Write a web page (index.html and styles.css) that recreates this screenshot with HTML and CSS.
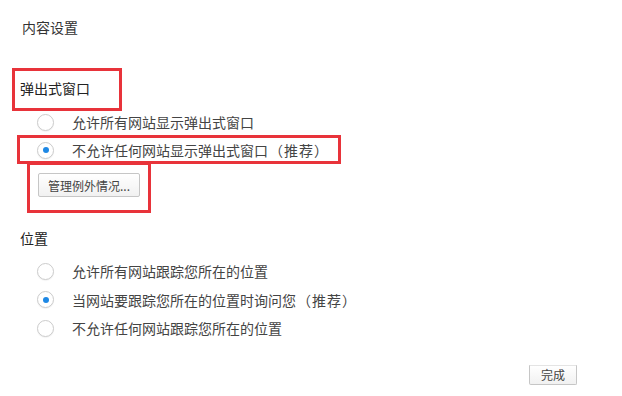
FILE: index.html
```html
<!DOCTYPE html>
<html lang="zh-CN">
<head>
    <meta charset="UTF-8">
    <title>内容设置</title>
    <link rel="stylesheet" href="styles.css">
</head>
<body>
    <div class="page">
        <div class="page-title">内容设置</div>

        <!-- 弹出式窗口 -->
        <div class="section popups">
            <div class="section-title">弹出式窗口</div>
            <div class="option-list">
                <label class="option"><span class="radio"></span>允许所有网站显示弹出式窗口</label>
                <label class="option"><span class="radio checked"></span>不允许任何网站显示弹出式窗口<span class="hint">（推荐）</span></label>
            </div>
            <button class="btn btn-exceptions">管理例外情况...</button>
        </div>

        <!-- 位置 -->
        <div class="section location">
            <div class="section-title">位置</div>
            <div class="option-list">
                <label class="option"><span class="radio"></span>允许所有网站跟踪您所在的位置</label>
                <label class="option"><span class="radio checked"></span>当网站要跟踪您所在的位置时询问您<span class="hint">（推荐）</span></label>
                <label class="option"><span class="radio"></span>不允许任何网站跟踪您所在的位置</label>
            </div>
        </div>

        <div class="footer">
            <button class="btn btn-done">完成</button>
        </div>

        <!-- annotation boxes -->
        <div class="mark mark-heading"></div>
        <div class="mark mark-option"></div>
        <div class="mark mark-button"></div>
    </div>
</body>
</html>
```

FILE: styles.css
```css
:root {
    --text-color: #333333;
    --option-color: #444444;
    --radio-border: #cccccc;
    --radio-dot: #1e88e5;
    --mark-color: #e8333a;
}

body {
    margin: 0;
    background: #ffffff;
    font-family: "Noto Sans CJK SC", "Noto Sans", sans-serif;
    color: var(--text-color);
}

.page {
    position: relative;
    width: 622px;
    height: 396px;
    padding: 0 20px;
    box-sizing: border-box;
}

.page-title {
    padding: 17px 0 0 2px;
    font-size: 14px;
    line-height: 20px;
}

.section-title {
    font-size: 14px;
    line-height: 20px;
    color: #222222;
}

.popups {
    margin-top: 41px;
}

.location {
    margin-top: 31px;
}

.option-list {
    display: flex;
    flex-direction: column;
    margin-top: 10px;
}

.location .option-list {
    margin-top: 9px;
}

.option {
    display: flex;
    align-items: center;
    height: 28px;
    font-size: 14px;
    color: var(--option-color);
}

.location .option {
    height: 28.5px;
}

.hint {
    letter-spacing: 1px;
    padding-left: 1px;
}

.radio {
    position: relative;
    width: 17px;
    height: 17px;
    margin: 0 18px 0 17px;
    border: 1px solid var(--radio-border);
    border-radius: 50%;
    box-sizing: border-box;
    background: #ffffff;
    box-shadow: 0 1px 1px rgba(0, 0, 0, 0.05);
}

.radio.checked::after {
    content: '';
    position: absolute;
    left: 4.5px;
    top: 4.5px;
    width: 6px;
    height: 6px;
    border-radius: 50%;
    background: var(--radio-dot);
}

.btn {
    padding: 0 9px;
    border: 1px solid #c6c6c6;
    border-radius: 2px;
    background: linear-gradient(#ffffff, #f1f1f1);
    font-family: inherit;
    font-size: 12px;
    color: #444444;
    cursor: pointer;
}

.btn-exceptions {
    height: 24px;
    margin: 9px 0 0 18px;
}

.footer {
    display: flex;
    justify-content: flex-end;
    margin-top: 22px;
    padding-right: 25px;
}

.btn-done {
    width: 48px;
    height: 20px;
    padding: 0;
    border-top-color: #e4e4e4;
    border-radius: 0 0 2px 2px;
}

.mark {
    position: absolute;
    border: 3px solid var(--mark-color);
    box-sizing: border-box;
}

.mark-heading { left: 12px; top: 68px; width: 110px; height: 43px; }
.mark-option { left: 17px; top: 135px; width: 324px; height: 29px; }
.mark-button { left: 27px; top: 162px; width: 124px; height: 51px; }
```
